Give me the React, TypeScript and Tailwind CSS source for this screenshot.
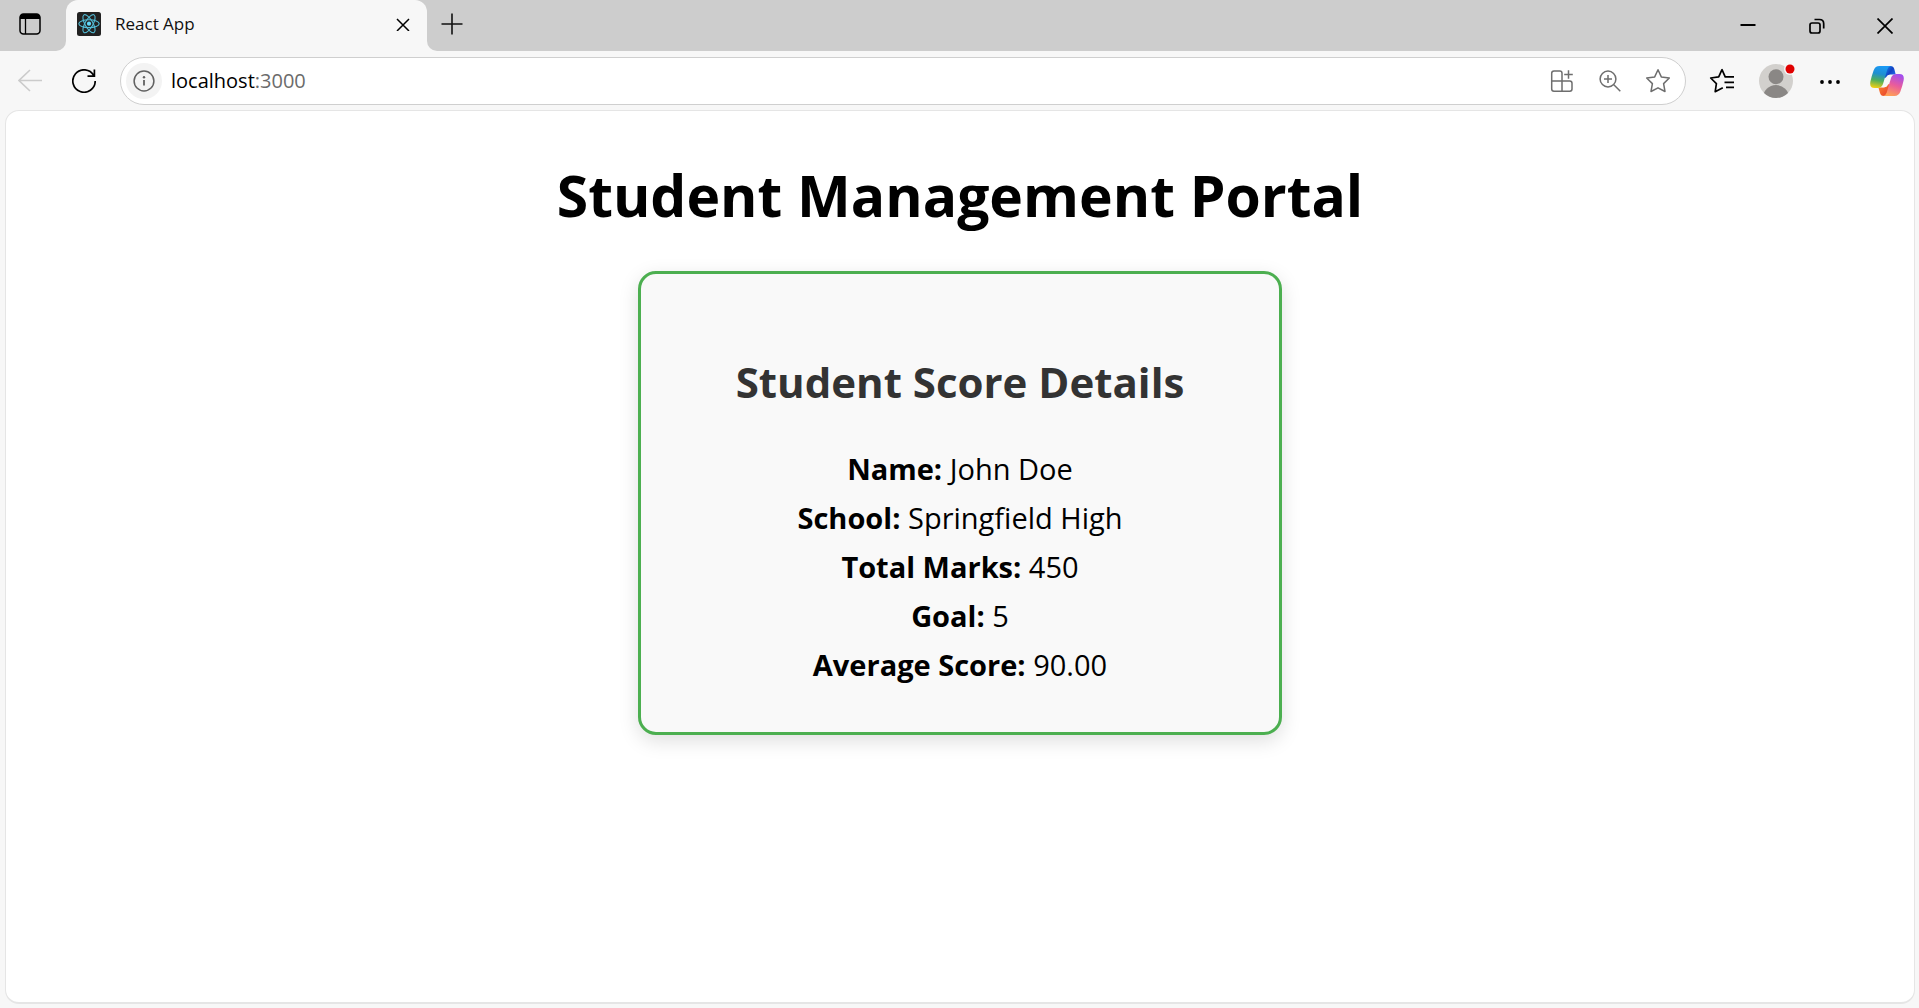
import type { ReactNode } from "react";

const details = [
  { label: "Name:", value: "John Doe" },
  { label: "School:", value: "Springfield High" },
  { label: "Total Marks:", value: "450" },
  { label: "Goal:", value: "5" },
  { label: "Average Score:", value: "90.00" },
];

function IconButton({ label, className, children }: { label: string; className: string; children: ReactNode }) {
  return (
    <button type="button" aria-label={label} className={`flex shrink-0 items-center justify-center ${className}`}>
      {children}
    </button>
  );
}

function ReactLogo() {
  return (
    <svg width="24" height="24" viewBox="0 0 24 24" fill="none" aria-hidden="true">
      <rect width="24" height="24" rx="2.5" fill="#222222" />
      <g stroke="#53bfd9" strokeWidth="1.1">
        <ellipse cx="12" cy="11.7" rx="10.2" ry="3.9" />
        <ellipse cx="12" cy="11.7" rx="10.2" ry="3.9" transform="rotate(60 12 11.7)" />
        <ellipse cx="12" cy="11.7" rx="10.2" ry="3.9" transform="rotate(120 12 11.7)" />
      </g>
      <circle cx="12" cy="11.7" r="2.1" fill="#61dafb" />
    </svg>
  );
}

function CopilotLogo() {
  return (
    <svg width="34" height="30" viewBox="0 0 34 30" aria-hidden="true">
      <defs>
        <linearGradient id="cpLeft" x1="10" y1="0" x2="6" y2="22" gradientUnits="userSpaceOnUse">
          <stop offset="0" stopColor="#1b9af5" />
          <stop offset="0.35" stopColor="#1f8fd0" />
          <stop offset="0.65" stopColor="#4fae5c" />
          <stop offset="1" stopColor="#f3cf12" />
        </linearGradient>
        <linearGradient id="cpTop" x1="15" y1="2" x2="24" y2="8" gradientUnits="userSpaceOnUse">
          <stop offset="0" stopColor="#1784e8" />
          <stop offset="0.6" stopColor="#1243c4" />
          <stop offset="1" stopColor="#1d5fe0" />
        </linearGradient>
        <linearGradient id="cpRight" x1="28" y1="8" x2="20" y2="30" gradientUnits="userSpaceOnUse">
          <stop offset="0" stopColor="#a04df0" />
          <stop offset="0.5" stopColor="#ea5c9b" />
          <stop offset="1" stopColor="#ffa255" />
        </linearGradient>
        <linearGradient id="cpBottom" x1="9" y1="22" x2="17" y2="29" gradientUnits="userSpaceOnUse">
          <stop offset="0" stopColor="#f8792e" />
          <stop offset="1" stopColor="#e9462f" />
        </linearGradient>
      </defs>
      <path d="M11 0H20.5Q23.5 0 24.3 3L25.7 8.500H20.500Q17.500 8.500 16.500 11.500L13 12Z" fill="url(#cpTop)" />
      <path d="M23 30H13.5Q10.8 30 10 27L8.4 21.500H13Q16 21.500 17 18.500L21 18Z" fill="url(#cpBottom)" />
      <path d="M9.5 0H21Q18.300 0.400 17.300 3.600L13 18Q11.600 22 7.600 22H4.500Q-0.800 22 0.400 15.500Q1.700 9.500 3.600 4.400Q5.200 0 9.500 0Z" fill="url(#cpLeft)" />
      <path d="M24.5 30H13Q15.700 29.600 16.700 26.400L21 12Q22.400 8 26.400 8H29.500Q34.800 8 33.600 14.500Q32.300 20.500 30.400 25.600Q28.800 30 24.500 30Z" fill="url(#cpRight)" />
      <path d="M18.700 9.200H21.800Q20.700 10.200 20.200 12L17.700 19.200Q16.900 21.300 14.500 21.300H12.300Q13.400 20.200 14 18.300L16.200 11.200Q16.900 9.200 18.700 9.200Z" fill="#f7f7f7" />
    </svg>
  );
}

function TabStrip() {
  return (
    <div className="flex h-[51px] shrink-0 bg-[#cdcdcd]">
      <div className="flex w-[66px] shrink-0 bg-[#f7f7f7]">
        <div className="flex grow items-start rounded-br-[10px] bg-[#cdcdcd] pl-[6px]">
          <IconButton label="Tab actions" className="h-12 w-12">
            <svg width="22" height="22" viewBox="0 0 22 22" fill="none" aria-hidden="true">
              <rect x="1" y="1" width="20" height="20" rx="3.5" stroke="#000" strokeWidth="1.5" />
              <path d="M1 6V4.500A3.500 3.500 0 0 1 4.500 1H17.500A3.500 3.500 0 0 1 21 4.500V6Z" fill="#000" />
              <path d="M6.500 6V21" stroke="#000" strokeWidth="1.300" />
            </svg>
          </IconButton>
        </div>
      </div>
      <div className="flex w-[361px] shrink-0 items-center rounded-t-[12px] bg-[#f7f7f7] pr-2 pb-[3px] pl-[11px]">
        <ReactLogo />
        <span className="grow pl-[14px] text-[17px] leading-6 text-[#111]">React App</span>
        <IconButton label="Close tab" className="h-8 w-8">
          <svg width="14" height="14" viewBox="0 0 14 14" fill="none" stroke="#000" strokeWidth="1.5" aria-hidden="true">
            <path d="M1 2l12 12M13 2L1 14" />
          </svg>
        </IconButton>
      </div>
      <div className="flex w-[50px] shrink-0 bg-[#f7f7f7]">
        <div className="flex grow items-start rounded-bl-[10px] bg-[#cdcdcd]">
          <IconButton label="New tab" className="h-12 w-[50px]">
            <svg width="22" height="22" viewBox="0 0 22 22" fill="none" stroke="#111" strokeWidth="1.6" aria-hidden="true">
              <path d="M11 .5v21M.5 11h21" />
            </svg>
          </IconButton>
        </div>
      </div>
      <div className="grow" />
      <IconButton label="Minimize" className="w-[69px]">
        <svg width="16" height="16" viewBox="0 0 16 16" fill="none" stroke="#000" strokeWidth="2" aria-hidden="true">
          <path d="M0.500 7h15" />
        </svg>
      </IconButton>
      <IconButton label="Restore" className="w-[69px]">
        <svg width="16" height="16" viewBox="0 0 16 16" fill="none" stroke="#000" strokeWidth="1.7" aria-hidden="true">
          <rect x="1" y="5" width="10" height="10" rx="2" />
          <path d="M5.500 1.500H10.500Q14.700 1.500 14.700 5.700V10.500" />
        </svg>
      </IconButton>
      <IconButton label="Close" className="w-[68px]">
        <svg width="16" height="16" viewBox="0 0 16 16" fill="none" stroke="#000" strokeWidth="1.700" aria-hidden="true">
          <path d="M.5 .5l15 15M15.500 .5l-15 15" />
        </svg>
      </IconButton>
    </div>
  );
}

function Toolbar() {
  return (
    <div className="flex h-[59px] shrink-0 items-center pr-[2px] pl-[3px]">
      <IconButton label="Back" className="h-12 w-[54px]">
        <svg width="24" height="24" viewBox="0 0 24 24" fill="none" stroke="#cbcbcb" strokeWidth="1.600" aria-hidden="true">
          <path d="M24 11.500H1M12 1L1 11.500L12 22" />
        </svg>
      </IconButton>
      <IconButton label="Refresh" className="h-12 w-[54px]">
        <svg width="24" height="24" viewBox="0 0 24 24" fill="none" stroke="#000" strokeWidth="1.700" aria-hidden="true">
          <path d="M23.200 12A11.200 11.200 0 1 1 21.800 6.600M22.400 .5V7.200H15.500" />
        </svg>
      </IconButton>
      <div className="ml-[9px] flex h-12 grow items-center rounded-full border border-[#cfcfcf] bg-white pr-[3px] pl-[5px]">
        <IconButton label="View site information" className="h-9 w-9 rounded-full bg-[#f3f3f3]">
          <svg width="22" height="22" viewBox="0 0 22 22" fill="none" stroke="#616161" strokeWidth="1.500" aria-hidden="true">
            <circle cx="11" cy="11" r="9.900" />
            <path d="M11 10v5.500" strokeWidth="1.800" />
            <circle cx="11" cy="7.200" r="1.200" fill="#616161" stroke="none" />
          </svg>
        </IconButton>
        <button type="button" aria-label="Address" className="grow cursor-text pl-[9px] text-left text-[20px] leading-7 text-[#6b6b6b]">
          <span className="text-black">localhost</span>:3000
        </button>
        <IconButton label="Apps" className="h-10 w-12">
          <svg width="24" height="24" viewBox="0 0 24 24" fill="none" stroke="#6e6e6e" strokeWidth="1.500" aria-hidden="true">
            <path d="M12 12V4.200Q12 2 9.800 2H4Q1.700 2 1.700 4.300V20Q1.700 22.200 4 22.200H19.800Q22 22.200 22 20V14.300Q22 12 19.800 12H1.700M12 12V22.200M18.500 1.200V9.800M14.200 5.500H22.800" />
          </svg>
        </IconButton>
        <IconButton label="Zoom" className="h-10 w-12">
          <svg width="22" height="22" viewBox="0 0 22 22" fill="none" stroke="#6e6e6e" strokeWidth="1.500" aria-hidden="true">
            <circle cx="9" cy="9" r="7.900" />
            <path d="M14.800 14.800L21.300 21.300M9 5v8M5 9h8" />
          </svg>
        </IconButton>
        <IconButton label="Add to favorites" className="h-10 w-12">
          <svg width="26" height="26" viewBox="0 0 26 26" fill="none" stroke="#6e6e6e" strokeWidth="1.500" strokeLinejoin="round" aria-hidden="true">
            <path d="M13 1.700L16.300 8.900L24.300 10L18.600 15.600L20 23.500L13 19.800L6 23.500L7.400 15.600L1.700 10L9.700 8.900Z" />
          </svg>
        </IconButton>
      </div>
      <IconButton label="Favorites" className="ml-[9px] h-12 w-[54px]">
        <svg width="26" height="26" viewBox="0 0 26 26" fill="none" stroke="#000" strokeWidth="1.700" strokeLinejoin="round" aria-hidden="true">
          <path d="M18 8.900H16.200L13 1.700L9.700 8.900L1.700 10L7.400 15.600L6.200 23.700L13.800 19.800M17 8.900H25M15.500 14.300H25M17 19.300H25" />
        </svg>
      </IconButton>
      <IconButton label="Profile" className="h-12 w-[54px]">
        <svg width="36" height="36" viewBox="0 0 36 36" overflow="visible" aria-hidden="true">
          <defs>
            <clipPath id="avatarClip">
              <circle cx="18" cy="18" r="17" />
            </clipPath>
          </defs>
          <circle cx="18" cy="18" r="17" fill="#d2d0cd" />
          <g fill="#8a8785" clipPath="url(#avatarClip)">
            <circle cx="18" cy="13.700" r="7.500" />
            <circle cx="18" cy="35" r="13" />
          </g>
          <circle cx="32" cy="6" r="6" fill="#f7f7f7" />
          <circle cx="32" cy="6" r="4.500" fill="#e00000" />
        </svg>
      </IconButton>
      <IconButton label="Settings and more" className="h-12 w-[54px]">
        <svg width="20" height="6" viewBox="0 0 20 6" fill="#000" aria-hidden="true">
          <circle cx="2" cy="4" r="1.900" />
          <circle cx="10" cy="4" r="1.900" />
          <circle cx="18" cy="4" r="1.900" />
        </svg>
      </IconButton>
      <IconButton label="Copilot" className="h-12 w-[60px]">
        <CopilotLogo />
      </IconButton>
    </div>
  );
}

export default function App() {
  return (
    <div className="flex min-h-screen flex-col bg-[#f7f7f7] font-['Open_Sans','Noto_Sans',sans-serif]">
      <TabStrip />
      <Toolbar />
      <main className="mr-1 mb-1 ml-[5px] flex grow flex-col items-center rounded-[14px] border border-b-2 border-[#e5e5e5] bg-white px-4 pt-11 pb-10">
        <h1 className="text-center text-[57px] leading-[80px] font-bold text-black">Student Management Portal</h1>
        <section className="mt-9 w-full max-w-[644px] rounded-[18px] border-3 border-[#4caf50] bg-[#f9f9f9] px-6 pt-[78px] pb-[43px] text-center shadow-[0_6px_20px_rgba(0,0,0,0.13)]">
          <h2 className="mb-8 text-[42px] leading-[60px] font-bold text-[#333333]">Student Score Details</h2>
          {details.map((item) => (
            <p key={item.label} className="text-[29px] leading-[49px] text-black">
              <strong className="font-bold">{item.label}</strong> {item.value}
            </p>
          ))}
        </section>
      </main>
    </div>
  );
}
